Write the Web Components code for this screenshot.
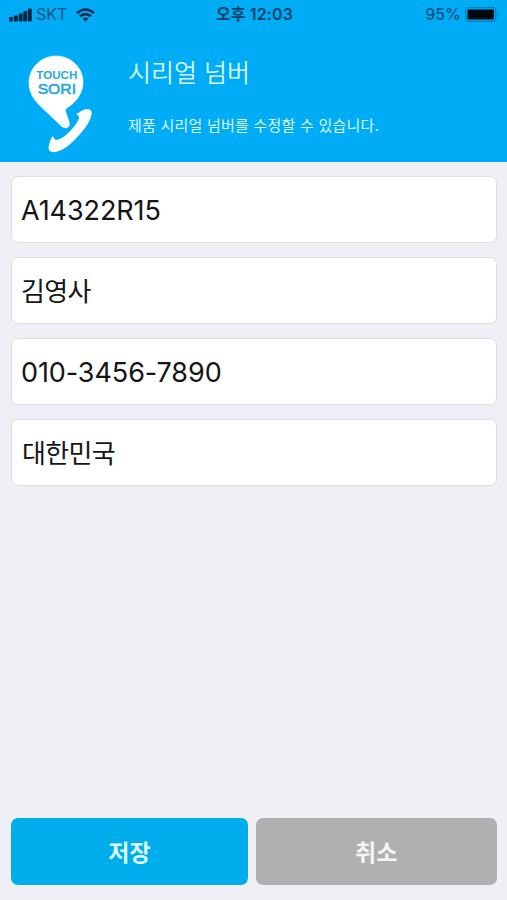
<!DOCTYPE html>
<html lang="ko">
<head>
<meta charset="utf-8">
<title>시리얼 넘버</title>
<style>
html, body {
    height: 100%;
    margin: 0;
}
body {
    font-family: Inter, "Noto Sans CJK KR", sans-serif;
}
</style>
</head>
<body>
<serial-page>
    <app-header slot="header">
        <status-bar slot="status">
            <span slot="carrier">SKT</span>
            <span slot="time">오후 12:03</span>
            <span slot="battery">95%</span>
        </status-bar>
        <touch-logo slot="logo"></touch-logo>
        <span slot="title">시리얼 넘버</span>
        <span slot="description">제품 시리얼 넘버를 수정할 수 있습니다.</span>
    </app-header>
    <form-field latin>A14322R15</form-field>
    <form-field>김영사</form-field>
    <form-field latin>010-3456-7890</form-field>
    <form-field style="--indent: 10px">대한민국</form-field>
    <action-button slot="actions" variant="primary">저장</action-button>
    <action-button slot="actions">취소</action-button>
</serial-page>

<script>
const createTemplate = html => {
    const template = document.createElement('template');
    template.innerHTML = html;
    return template;
};

class BaseElement extends HTMLElement {
    constructor() {
        super();
        const root = this.attachShadow({mode: 'open'});
        root.appendChild(this.constructor.template.content.cloneNode(true));
    }
}

class SerialPage extends BaseElement {}
SerialPage.template = createTemplate(`
    <style>
    :host {
        display: flex;
        flex-direction: column;
        height: 100%;
        min-height: 900px;
        box-sizing: border-box;
        background: #f0eff5;
    }
    main {
        flex: 1;
        display: flex;
        flex-direction: column;
        gap: 13.5px;
        padding: 13.5px 10.5px 0 11px;
    }
    footer {
        display: grid;
        grid-template-columns: 237px 1fr;
        gap: 8px;
        padding: 0 10.5px 15px 11px;
    }
    </style>
    <slot name="header"></slot>
    <main><slot></slot></main>
    <footer><slot name="actions"></slot></footer>
`);
customElements.define('serial-page', SerialPage);

class AppHeader extends BaseElement {}
AppHeader.template = createTemplate(`
    <style>
    :host {
        display: block;
        height: 162px;
        background: #00acf5;
        color: #d9f7ff;
        font-family: "Noto Sans CJK KR", sans-serif;
    }
    .content {
        display: grid;
        grid-template-columns: 95px 1fr;
        column-gap: 18px;
        padding: 15px 0 0 15px;
    }
    h1 {
        margin: 8px 0 0;
        font-size: 25px;
        line-height: 36px;
        font-weight: 350;
        letter-spacing: 0;
    }
    p {
        margin: 25px 0 0;
        font-size: 15px;
        line-height: 22px;
        letter-spacing: .23px;
    }
    </style>
    <slot name="status"></slot>
    <div class="content">
        <slot name="logo"></slot>
        <div>
            <h1><slot name="title"></slot></h1>
            <p><slot name="description"></slot></p>
        </div>
    </div>
`);
customElements.define('app-header', AppHeader);

class StatusBar extends BaseElement {}
StatusBar.template = createTemplate(`
    <style>
    :host {
        display: grid;
        grid-template-columns: 1fr auto 1fr;
        align-items: center;
        height: 30px;
        padding: 0 7px 1px 9px;
        box-sizing: border-box;
        color: #07527f;
        font: 400 16px/29px Inter, "Noto Sans CJK KR", sans-serif;
    }
    .side {
        display: flex;
        align-items: center;
    }
    .right {
        justify-content: flex-end;
        gap: 4px;
        font-weight: 500;
    }
    .time {
        color: #064369;
        font-weight: 600;
        letter-spacing: .15px;
    }
    .wifi {
        margin-left: 8.5px;
    }
    .signal {
        margin-right: 4px;
    }
    </style>
    <div class="side">
        <svg class="signal" width="23" height="14" viewBox="0 0 23 14" fill="#032845">
            <rect x="0" y="9" width="4" height="4.5" rx="1"/>
            <rect x="4.8" y="7.5" width="4" height="6" rx="1"/>
            <rect x="9.6" y="5.4" width="4" height="8.1" rx="1"/>
            <rect x="14.2" y="3" width="4" height="10.5" rx="1"/>
            <rect x="18.8" y=".5" width="4" height="13" rx="1"/>
        </svg>
        <slot name="carrier"></slot>
        <svg class="wifi" width="19" height="14" viewBox="0 0 19 14" fill="none" stroke="#032d4b" stroke-width="2.5">
            <path d="M1 5.2Q9.5-2.1 18 5.2M4 8.4Q9.5 3.8 15 8.4"/>
            <path d="M6.5 10.6Q9.5 8.2 12.5 10.6L9.5 13.6Z" fill="#032d4b" stroke="none"/>
        </svg>
    </div>
    <div class="time"><slot name="time"></slot></div>
    <div class="side right">
        <slot name="battery"></slot>
        <svg width="35" height="15" viewBox="0 0 35 15">
            <rect x=".7" y=".7" width="30" height="13.6" rx="3" fill="none" stroke="#067fb8" stroke-width="1.3"/>
            <rect x="2.5" y="2.5" width="26.4" height="10" rx="1.2" fill="#000912"/>
            <path d="M32.3 5Q34.8 7.5 32.3 10Z" fill="#067fb8"/>
        </svg>
    </div>
`);
customElements.define('status-bar', StatusBar);

class TouchLogo extends BaseElement {}
TouchLogo.template = createTemplate(`
    <style>
    :host {
        display: block;
        width: 95px;
        height: 117px;
    }
    svg {
        display: block;
    }
    text {
        font-family: "Liberation Sans", sans-serif;
        fill: #2ba8d6;
    }
    </style>
    <svg width="95" height="117" viewBox="0 0 285 351">
        <g fill="#fff" stroke="#fff" stroke-width="2" stroke-linejoin="round">
            <!-- speech bubble -->
            <path d="M123 33C167 33 203 67 204 110C204 137 192 157 175 174C160 189 148 188 152 200L163 234C166 247 152 253 140 244L75 182C52 160 42 137 42 114C42 69 78 33 123 33Z"/>
            <!-- handset -->
            <path stroke-width="4" d="M187 207Q193 206 198 201C210 191 230 190 228 207C225 225 213 245 195 264C184 277 172 289 160 299C145 311 130 318 115 320Q101 319 103 304Q105 289 113 276Q115 285 122 287C132 287 145 280 155 271C164 263 173 254 180 244Q190 232 195 219Q192 210 187 207Z"/>
        </g>
        <text x="64" y="103" font-size="32" font-weight="700" textLength="123" lengthAdjust="spacingAndGlyphs">TOUCH</text>
        <text x="68" y="146" font-size="43" stroke="#2ba8d6" stroke-width="1.8" textLength="115" lengthAdjust="spacingAndGlyphs">SORI</text>
    </svg>
`);
customElements.define('touch-logo', TouchLogo);

class FormField extends BaseElement {}
FormField.template = createTemplate(`
    <style>
    :host {
        display: flex;
        align-items: center;
        height: 67.5px;
        padding: 0 10px 2px var(--indent, 9px);
        box-sizing: border-box;
        border: 1px solid #dfdfe3;
        border-radius: 7px;
        background: #fff;
        color: #151515;
        font-size: 26px;
        letter-spacing: -.7px;
    }
    :host([latin]) {
        padding-top: 2px;
        padding-bottom: 0;
        font-size: 27px;
        letter-spacing: -.08px;
    }
    </style>
    <slot></slot>
`);
customElements.define('form-field', FormField);

class ActionButton extends BaseElement {}
ActionButton.template = createTemplate(`
    <style>
    :host {
        display: block;
    }
    button {
        display: block;
        width: 100%;
        height: 67px;
        padding: 0 0 2px;
        border: 0;
        border-radius: 7px;
        background: #b0b0b0;
        color: #f4f4f4;
        font: 700 23px/64px "Noto Sans CJK KR", sans-serif;
    }
    :host([variant=primary]) button {
        background: #00adec;
        color: #dcfaff;
    }
    </style>
    <button type="button"><slot></slot></button>
`);
customElements.define('action-button', ActionButton);
</script>
</body>
</html>
